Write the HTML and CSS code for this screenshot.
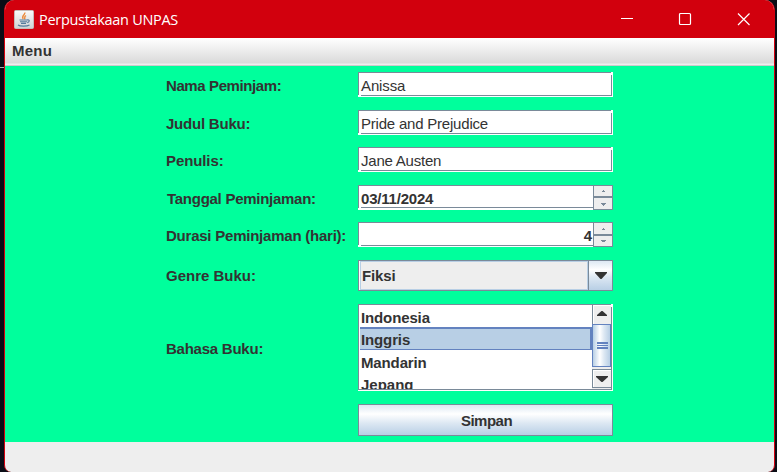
FILE: index.html
```html
<!DOCTYPE html>
<html lang="id">
<head>
<meta charset="utf-8">
<title>Perpustakaan UNPAS</title>
<link rel="stylesheet" href="styles.css">
</head>
<body>
<div class="window">
  <header class="titlebar">
    <svg class="app-icon" width="20" height="19" viewBox="0 0 20 19">
      <defs><linearGradient id="tile" x1="0" y1="0" x2="0" y2="1"><stop offset="0" stop-color="#fafafa"/><stop offset="1" stop-color="#cfd2d4"/></linearGradient></defs>
      <rect x=".5" y=".5" width="19" height="18" rx="1" fill="url(#tile)" stroke="#c5bcb9"/>
      <path d="M10.8 2.5C11.5 5 7 5.600 9.200 9M12 5.500C9.500 7 11.500 7.600 10.500 9.300" fill="none" stroke="#eb8a3c" stroke-width="1.400"/>
      <path d="M5.500 10h7.500M6 11.700h7M7 13.400h5M13 10c3-.6 3 2 .2 2.600M4 15c2 1.600 9 1.500 11.500 0" fill="none" stroke="#557b9d" stroke-width="1.100"/>
    </svg>
    <span class="title">Perpustakaan UNPAS</span>
    <svg class="controls" width="130" height="14" viewBox="0 0 130 14">
      <path d="M0 6.500h12" stroke="#fff" fill="none"/>
      <rect x="58.500" y="1.500" width="11" height="11" rx="1" stroke="#fff" stroke-width="1.200" fill="none"/>
      <path d="M117 1.500l11.500 11.500M128.500 1.500L117 13" stroke="#fff" stroke-width="1.200" fill="none"/>
    </svg>
  </header>
  <nav class="menubar"><span>Menu</span></nav>
  <main class="form">
    <label class="l1">Nama Peminjam:</label>
    <div class="field anissa">Anissa</div>
    <label class="l2">Judul Buku:</label>
    <div class="field">Pride and Prejudice</div>
    <label class="l3">Penulis:</label>
    <div class="field">Jane Austen</div>
    <label class="l4">Tanggal Peminjaman:</label>
    <div class="spinner"><span class="value">03/11/2024</span>
      <svg width="20" height="25" viewBox="0 0 20 25"><path d="M0 0h20v25H0z" fill="#7a8a99"/><path d="M1 1h18v10H1zM1 13h18v11H1z" fill="#eee"/><path d="M10 5h1v1h1v1H9V6h1zM8 18h5v1h-1v1h-1v1h-1v-1H9v-1H8z" fill="#7a8a99"/></svg>
    </div>
    <label class="l5">Durasi Peminjaman (hari):</label>
    <div class="spinner number"><span class="value">4</span>
      <svg width="20" height="25" viewBox="0 0 20 25"><path d="M0 0h20v25H0z" fill="#7a8a99"/><path d="M1 1h18v11H1zM1 14h18v10H1z" fill="#eee"/><path d="M10 6h1v1h1v1H9V7h1zM8 18h5v1h-1v1h-3v-1H8z" fill="#7a8a99"/></svg>
    </div>
    <label class="l6">Genre Buku:</label>
    <div class="combo"><span class="choice">Fiksi</span>
      <span class="arrow"><svg width="12" height="7" viewBox="0 0 12 7"><path d="M0 0h12v1L6.500 7h-1L0 1z" fill="#333"/></svg></span>
    </div>
    <label class="l7">Bahasa Buku:</label>
    <div class="list">
      <div class="items">
        <div class="item first">Indonesia</div>
        <div class="item selected">Inggris</div>
        <div class="item third">Mandarin</div>
        <div class="item fourth">Jepang</div>
      </div>
      <div class="scrollbar">
        <span class="up"><svg width="10" height="5" viewBox="0 0 10 5"><path d="M4.500 0h1L10 4v1H0V4z" fill="#333"/></svg></span>
        <span class="thumb"><i></i><i></i><i></i></span>
        <span class="down"><svg width="12" height="6" viewBox="0 0 12 6"><path d="M0 0h12v1L6.500 6h-1L0 1z" fill="#333"/></svg></span>
      </div>
    </div>
    <div class="button">Simpan</div>
  </main>
</div>
</body>
</html>
```
FILE: styles.css
```css
* { box-sizing: border-box; }
body {
  margin: 0;
  width: 777px;
  height: 472px;
  padding: 0 2px 0 4px;
  overflow: hidden;
  background: linear-gradient(#a7adb0, #a7adb0) 0 67px / 4px 1px no-repeat, #0b0d16;
  font: bold 15px/17px "Liberation Sans", sans-serif;
  color: #333;
}
.window {
  height: 472px;
  border: solid #d4000f;
  border-width: 0 1px;
  border-radius: 10px 10px 7px 7px;
  overflow: hidden;
  background: #eee;
}
.titlebar {
  display: flex;
  align-items: center;
  height: 38px;
  padding-left: 9px;
  background: #d2000d;
  color: #fff;
  font: 14.500px/20px "Open Sans", sans-serif;
}
.title { margin-left: 5px; padding-top: 1px; letter-spacing: -.3px; }
.controls { margin: 0 23px 0 auto; }
.menubar {
  height: 28px;
  padding: 4px 7px 0;
  border-bottom: 1px solid #ccc;
  background: linear-gradient(#fff, #dadada 25px, #eee 26px);
  letter-spacing: .25px;
}
.form {
  display: grid;
  grid-template-columns: 192px 255px;
  grid-template-rows: 38px 37px 38px 37px 38px 44px 100px 32px;
  height: 376px;
  padding: 6px 0 0 161px;
  background: #00ff9c;
}
label { padding-top: 5px; white-space: nowrap; }
.l1 { letter-spacing: -.4px; }
.l2 { letter-spacing: -.22px; }
.l3 { letter-spacing: -.1px; }
.l4 { padding-left: 1px; letter-spacing: -.27px; }
.l5 { letter-spacing: -.23px; }
.l6 { padding-top: 7px; }
.l7 { padding-top: 36px; letter-spacing: -.24px; }
.field {
  height: 25px;
  padding: 5px 3px;
  font-weight: normal;
  letter-spacing: -.21px;
  background:
    linear-gradient(#7a8a99, #7a8a99) 0 0 / 253px 1px no-repeat,
    linear-gradient(#7a8a99, #7a8a99) 0 0 / 1px 23px no-repeat,
    linear-gradient(#7a8a99, #7a8a99) 253px 3px / 1px 21px no-repeat,
    linear-gradient(#7a8a99, #7a8a99) 3px 23px / 250px 1px no-repeat,
    #fff;
}
.anissa { letter-spacing: -.12px; }
.spinner { display: flex; height: 25px; }
.value {
  width: 235px;
  padding: 5px 0 0 3px;
  letter-spacing: -.2px;
  background:
    linear-gradient(#7a8a99, #7a8a99) 0 0 / 235px 1px no-repeat,
    linear-gradient(#7a8a99, #7a8a99) 0 0 / 1px 23px no-repeat,
    linear-gradient(#7a8a99, #7a8a99) 3px 22px / 232px 1px no-repeat,
    #fff;
}
.number .value { text-align: right; padding-right: 1px; letter-spacing: 0; background-position: 0 0, 0 0, 3px 23px; }
.combo {
  display: flex;
  height: 31px;
  border: 1px solid #7a8a99;
  background: #fff;
}
.choice {
  width: 228px;
  margin-left: 1px;
  padding: 5px 1px;
  border: 1px solid #b8cfe5;
  letter-spacing: -.15px;
  background: #eee;
}
.arrow {
  display: flex;
  flex: 1;
  align-items: center;
  justify-content: center;
  border-left: 1px solid #7a8a99;
  background: linear-gradient(#dde8f3, #fff 30%, #dde8f3 55%, #b8cfe5);
}
.list {
  display: flex;
  height: 87px;
  padding: 1px 2px 2px;
  background:
    linear-gradient(#7a8a99, #7a8a99) 0 0 / 253px 1px no-repeat,
    linear-gradient(#7a8a99, #7a8a99) 0 0 / 1px 86px no-repeat,
    linear-gradient(#7a8a99, #7a8a99) 253px 3px / 1px 83px no-repeat,
    linear-gradient(#7a8a99, #7a8a99) 1px 85px / 253px 1px no-repeat,
    #fff;
}
.items { width: 232px; height: 84px; overflow: hidden; letter-spacing: -.13px; }
.item { height: 23px; padding: 4px 1px; }
.first { height: 22px; }
.selected { padding-top: 2px; border: solid #6382bf; border-width: 2px 2px 1px 0; background: #b8cfe5; }
.fourth { padding-top: 3px; letter-spacing: 0; }
.scrollbar { width: 19px; height: 84px; background: #eee; }
.up, .down {
  display: flex;
  justify-content: center;
  height: 19px;
  border-left: 1px solid #7a8a99;
  box-shadow: inset 1px 1px #fff;
  background: #eee;
}
.up { padding-top: 6px; }
.down { margin-top: 2px; padding: 6px 1px 0 0; border-top: 1px solid #7a8a99; border-bottom: 1px solid #7a8a99; }
.thumb {
  display: flex;
  flex-direction: column;
  align-items: center;
  justify-content: center;
  gap: 1px;
  height: 43px;
  padding-left: 2px;
  border: 1px solid #6382bf;
  background: linear-gradient(90deg, #b8cfe5, #fff 40%, #dde8f3 65%, #b8cfe5);
}
.thumb i { width: 11px; height: 2px; background: #6382bf; }
.thumb i:nth-child(2) { height: 1px; }
.button {
  grid-column: 2;
  height: 32px;
  padding: 7px 0 0 2px;
  border: 1px solid #7a8a99;
  letter-spacing: -.5px;
  text-align: center;
  background: linear-gradient(#dde8f3, #fff 30%, #dde8f3 60%, #b8cfe5);
}
```
